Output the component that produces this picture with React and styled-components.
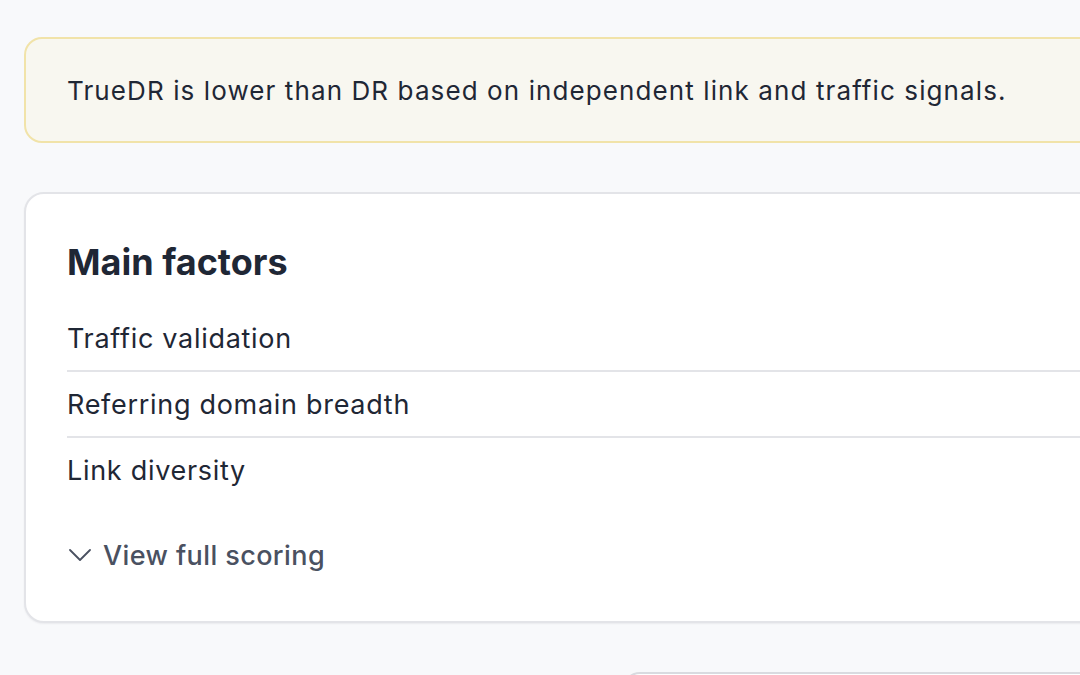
import React from 'react';
import styled, { createGlobalStyle } from 'styled-components';

const GlobalStyle = createGlobalStyle`
  html, body {
    margin: 0;
    padding: 0;
    background: #f8f9fb;
    overflow: hidden;
  }
  body {
    font-family: Inter, "Noto Sans", sans-serif;
    color: #1f2735;
  }
`;

const Page = styled.div`
  width: 1120px;
  padding: 37px 0 0 24px;
  display: flex;
  flex-direction: column;
  gap: 49px;
`;

const Notice = styled.div`
  box-sizing: border-box;
  min-height: 106px;
  display: flex;
  align-items: center;
  padding: 0 41px;
  background: #f8f7f0;
  border: 2px solid #f1e3a9;
  border-radius: 18px;
  font-size: 26px;
  letter-spacing: 1.1px;
  color: #1f2735;
`;

const Card = styled.section`
  box-sizing: border-box;
  background: #ffffff;
  border: 2px solid #e3e4e8;
  border-radius: 20px;
  box-shadow: 0 1px 2px rgba(16, 24, 40, 0.06);
  padding: 46px 0 46px 41px;
`;

const Heading = styled.h2`
  margin: 0 0 22px;
  font-size: 36px;
  line-height: 44px;
  font-weight: 700;
  letter-spacing: 0;
  color: #1f2735;
`;

const FactorList = styled.ul`
  list-style: none;
  margin: 0;
  padding: 0;
`;

const Factor = styled.li`
  height: 64px;
  display: flex;
  align-items: center;
  font-size: 27px;
  letter-spacing: 0.7px;
  color: #1f2735;
  border-bottom: ${({ $last }) => ($last ? 'none' : '2px solid #e3e4e8')};
`;

const Toggle = styled.button`
  margin-top: 33px;
  height: 40px;
  display: flex;
  align-items: center;
  gap: 12px;
  padding: 0 0 0 2px;
  background: none;
  border: none;
  font-family: inherit;
  font-size: 27px;
  font-weight: 500;
  letter-spacing: 0.4px;
  color: #4a5161;
  cursor: pointer;
`;

const NextCard = styled.div`
  margin-left: 598px;
  height: 40px;
  background: #ffffff;
  border: 2px solid #d9dbe0;
  border-bottom: none;
  border-radius: 18px 0 0 0;
`;

const factors = ['Traffic validation', 'Referring domain breadth', 'Link diversity'];

const Chevron = () => (
  <svg width="22" height="12" viewBox="0 0 22 12" fill="none">
    <path d="M1 1l10 10L21 1" stroke="#4a5161" strokeWidth="1.8" strokeLinecap="round" strokeLinejoin="round" />
  </svg>
);

const App = () => {
  return (
    <>
      <GlobalStyle />
      <Page>
        <Notice>TrueDR is lower than DR based on independent link and traffic signals.</Notice>
        <Card>
          <Heading>Main factors</Heading>
          <FactorList>
            {factors.map((f, i) => (
              <Factor key={f} $last={i === factors.length - 1}>{f}</Factor>
            ))}
          </FactorList>
          <Toggle type="button">
            <Chevron />
            View full scoring
          </Toggle>
        </Card>
        <NextCard />
      </Page>
    </>
  );
};

export default App;
